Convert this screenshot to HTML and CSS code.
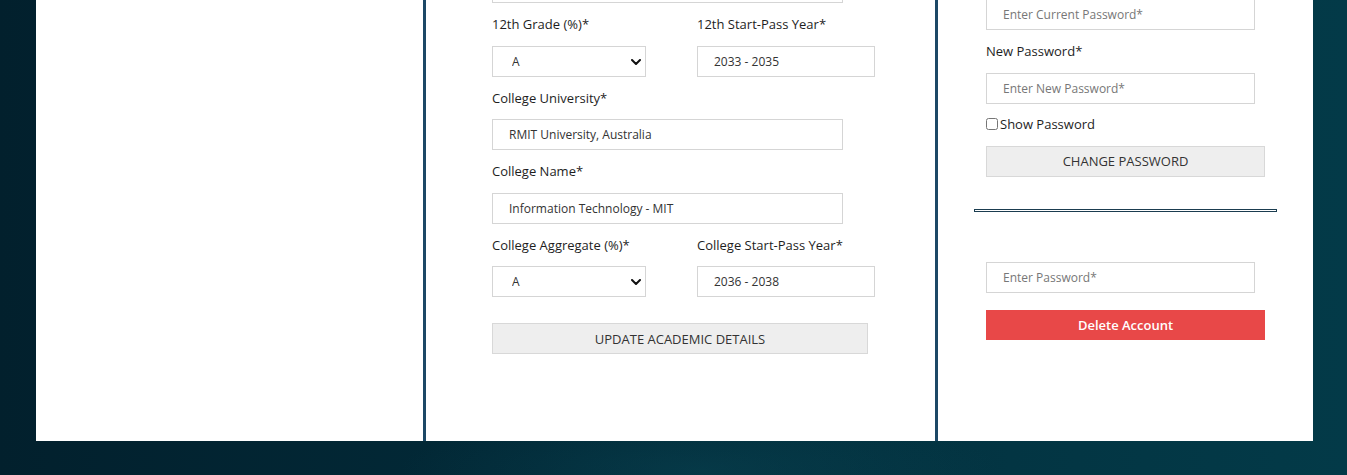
FILE: index.html
```html
<!DOCTYPE html>
<html>
<head>
<meta charset="utf-8">
<title>Profile</title>
<link rel="stylesheet" href="styles.css">
</head>
<body>
<div class="page">
  <div class="panel panel-left"></div>

  <div class="panel panel-mid">
    <form class="form form-academic">
      <input class="control control-wide" type="text" value="">
      <div class="row">
        <div class="field">
          <label class="label">12th Grade (%)*</label>
          <div class="select-wrap">
            <select class="control select"><option>A</option></select>
            <svg class="chev" width="10" height="6" viewBox="0 0 10 6"><path d="M1 1 L5 5 L9 1" fill="none" stroke="#111" stroke-width="2" stroke-linecap="round" stroke-linejoin="round"/></svg>
          </div>
        </div>
        <div class="field">
          <label class="label">12th Start-Pass Year*</label>
          <input class="control control-year" type="text" value="2033 - 2035">
        </div>
      </div>
      <label class="label">College University*</label>
      <input class="control control-wide" type="text" value="RMIT University, Australia">
      <label class="label">College Name*</label>
      <input class="control control-wide" type="text" value="Information Technology - MIT">
      <div class="row">
        <div class="field">
          <label class="label">College Aggregate (%)*</label>
          <div class="select-wrap">
            <select class="control select"><option>A</option></select>
            <svg class="chev" width="10" height="6" viewBox="0 0 10 6"><path d="M1 1 L5 5 L9 1" fill="none" stroke="#111" stroke-width="2" stroke-linecap="round" stroke-linejoin="round"/></svg>
          </div>
        </div>
        <div class="field">
          <label class="label">College Start-Pass Year*</label>
          <input class="control control-year" type="text" value="2036 - 2038">
        </div>
      </div>
      <button type="button" class="btn btn-update">UPDATE ACADEMIC DETAILS</button>
    </form>
  </div>

  <div class="panel panel-right">
    <form class="form form-password">
      <input class="control control-pass first" type="password" placeholder="Enter Current Password*">
      <label class="label">New Password*</label>
      <input class="control control-pass" type="password" placeholder="Enter New Password*">
      <label class="check"><input type="checkbox" class="checkbox">Show Password</label>
      <button type="button" class="btn btn-change">CHANGE PASSWORD</button>
    </form>
    <hr class="divider">
    <form class="form form-delete">
      <input class="control control-pass" type="password" placeholder="Enter Password*">
      <button type="button" class="btn btn-delete">Delete Account</button>
    </form>
  </div>
</div>
</body>
</html>
```

FILE: styles.css
```css
* { box-sizing: border-box; }

html, body {
  margin: 0;
  padding: 0;
  height: 100%;
}

body {
  background:
    radial-gradient(ellipse 300px 60px at 700px 470px, rgba(10, 70, 85, 0.45), rgba(10, 70, 85, 0) 100%),
    linear-gradient(90deg, #02202d 0%, #022a38 40%, #033543 75%, #033a48 100%);
  font-family: "Open Sans", "Liberation Sans", sans-serif;
  color: #222;
  overflow: hidden;
}

.page {
  display: flex;
  padding-left: 36px;
  height: 441px;
}

.panel {
  background: #fff;
  height: 100%;
  overflow: hidden;
}

.panel-left { width: 387px; }

.panel-mid {
  width: 512px;
  border-left: 3px solid #1c4866;
  padding-left: 66px;
}

.panel-right {
  width: 378px;
  border-left: 3px solid #1c4866;
  padding-left: 48px;
}

.form {
  display: flex;
  flex-direction: column;
  align-items: flex-start;
}

.form-academic { margin-top: -28px; }
.form-password { margin-top: -1px; }

.row {
  display: flex;
  gap: 51px;
}

.field {
  display: flex;
  flex-direction: column;
  align-items: flex-start;
}

.label {
  display: block;
  font-size: 13px;
  line-height: 20px;
  margin: 11.25px 0;
  color: #1e1e1e;
}

.control {
  height: 31px;
  border: 1px solid #d5d5d5;
  border-radius: 0;
  padding: 0 0 0 16px;
  font-family: "Open Sans", "Liberation Sans", sans-serif;
  font-size: 12px;
  color: #333;
  background: #fff;
  outline: none;
  margin: 0;
}

.control::placeholder { color: #777; }

.control-wide { width: 351px; }
.control-year { width: 178px; }
.control-pass { width: 269px; }

.select-wrap {
  position: relative;
  width: 154px;
}

.select {
  width: 154px;
  appearance: none;
  -webkit-appearance: none;
  padding-left: 19px;
}

.chev {
  position: absolute;
  right: 5px;
  top: 13px;
}

.btn {
  height: 31px;
  border: 1px solid #d8d8d8;
  background: #eee;
  font-family: "Open Sans", "Liberation Sans", sans-serif;
  font-size: 13px;
  color: #333;
  padding: 0;
  margin: 0;
  cursor: pointer;
}

.btn-update {
  width: 376px;
  margin-top: 26px;
}

.check {
  display: flex;
  align-items: center;
  font-size: 13px;
  line-height: 20px;
  margin-top: 10px;
  color: #1e1e1e;
}

.checkbox {
  width: 12px;
  height: 12px;
  margin: 0 2px 0 0;
}

.btn-change {
  width: 279px;
  margin-top: 12px;
}

.divider {
  width: 303px;
  height: 3px;
  margin: 32px 0 0 -12px;
  border: 1px solid #1b3d50;
  background: #fff;
}

.form-delete { margin-top: 50px; }

.btn-delete {
  width: 279px;
  height: 30px;
  margin-top: 17px;
  background: #e84848;
  border: none;
  color: #fff;
  font-weight: 600;
}
```
